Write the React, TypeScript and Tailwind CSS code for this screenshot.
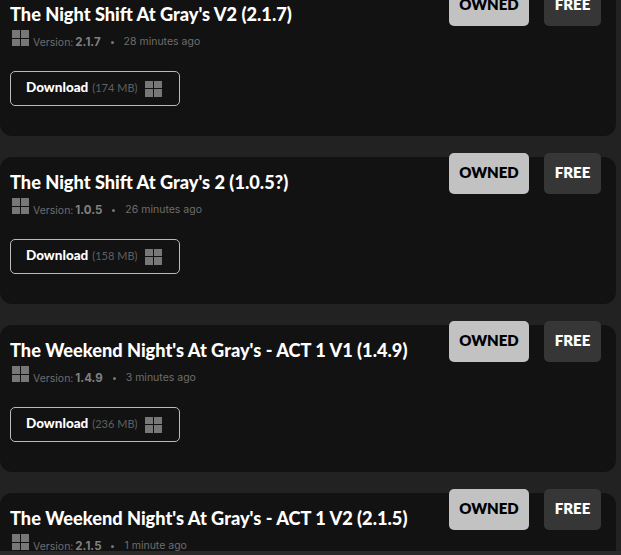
const cards = [
  { title: "The Night Shift At Gray's V2 (2.1.7)", version: "2.1.7", ago: "28 minutes ago", size: "174 MB" },
  { title: "The Night Shift At Gray's 2 (1.0.5?)", version: "1.0.5", ago: "26 minutes ago", size: "158 MB" },
  { title: "The Weekend Night's At Gray's - ACT 1 V1 (1.4.9)", version: "1.4.9", ago: "3 minutes ago", size: "236 MB" },
  { title: "The Weekend Night's At Gray's - ACT 1 V2 (2.1.5)", version: "2.1.5", ago: "1 minute ago", size: "" },
];

function WindowsIcon() {
  return (
    <div className="grid grid-cols-2 grid-rows-2 gap-[1px] w-[17px] h-[16px] shrink-0">
      <span className="bg-[#777]" />
      <span className="bg-[#777]" />
      <span className="bg-[#777]" />
      <span className="bg-[#777]" />
    </div>
  );
}

function App() {
  return (
    <div className="w-[621px] h-[555px] overflow-hidden bg-[#222] relative font-['Lato',sans-serif]">
      <div className="flex flex-col gap-[21px] mt-[-11px] mr-[5px]">
        {cards.map((c) => (
          <div key={c.title} className="relative h-[147px] shrink-0 bg-[#121212] rounded-[12px] pl-[10px] pt-[12px]">
            <div className="absolute top-[-4px] right-[15px] flex gap-[15px]">
              <span className="w-[80px] h-[41px] pb-[2px] flex items-center justify-center rounded-[5px] bg-[#c2c2c2] text-black text-[15px] font-extrabold">
                OWNED
              </span>
              <span className="w-[57px] h-[41px] pb-[2px] flex items-center justify-center rounded-[5px] bg-[#363636] text-white text-[15px] font-extrabold">
                FREE
              </span>
            </div>
            <h2 className="text-[18.2px] leading-[26px] font-black text-white">{c.title}</h2>
            <div className="flex items-start h-[17px] mt-[3px] ml-[2px] text-[#6e6e6e]">
              <WindowsIcon />
              <span className="ml-[4px] mt-[5px] leading-[14px] font-['Inter',sans-serif] text-[10.5px]">
                Version: <b className="font-bold text-[11.5px] text-[#808080] ml-[-1px]">{c.version}</b>
              </span>
              <span className="mt-[11px] ml-[10px] mr-[10px] w-[3px] h-[3px] rounded-full bg-[#777]" />
              <span className="mt-[5px] leading-[14px] font-['Inter',sans-serif] text-[10.5px]">{c.ago}</span>
            </div>
            {c.size && (
              <div className="mt-[24px] w-[170px] h-[35px] flex items-center pl-[15px] border border-[#bbb] rounded-[5px]">
                <span className="text-[13.5px] pb-[2px] font-black text-white">Download</span>
                <span className="ml-[4px] mr-[8px] text-[11px] text-[#606060]">({c.size})</span>
                <WindowsIcon />
              </div>
            )}
          </div>
        ))}
      </div>
      <div className="absolute bottom-0 left-0 right-0 h-[4px] bg-[#2a2a2a]" />
    </div>
  );
}

export default App;
